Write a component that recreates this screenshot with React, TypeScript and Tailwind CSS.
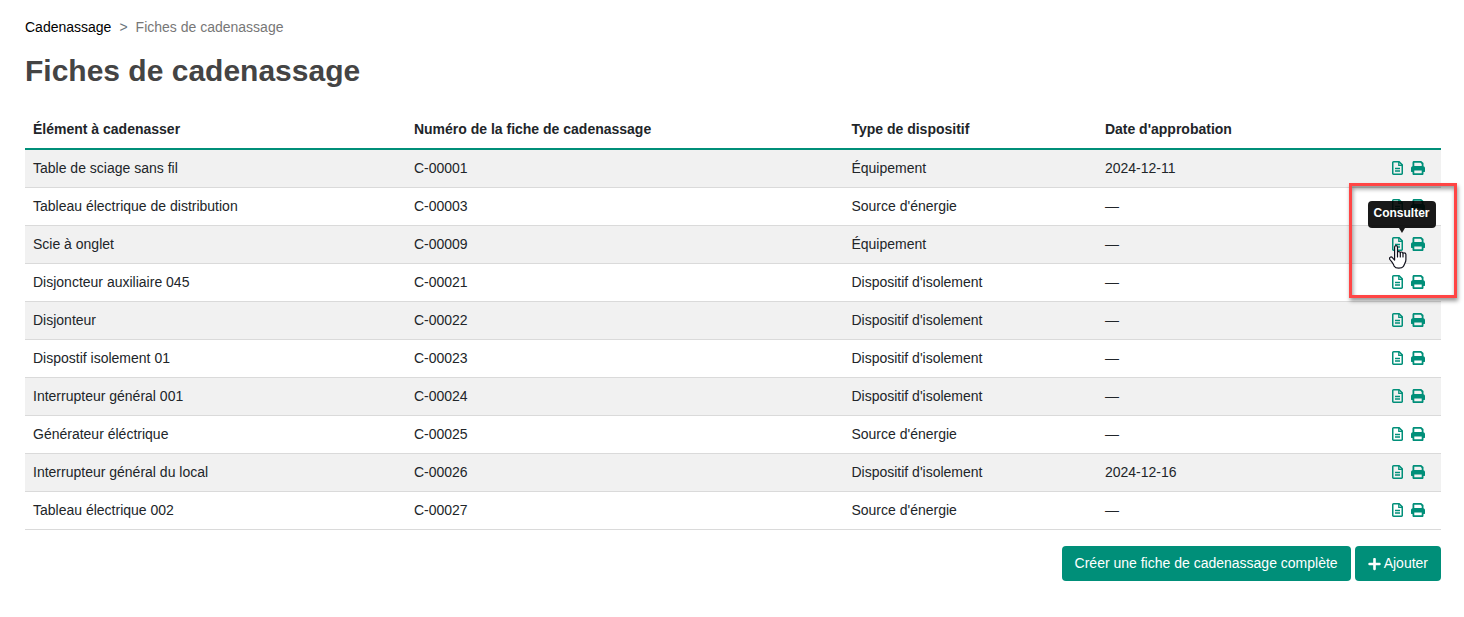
import React from "react";
import { FaPlus } from "react-icons/fa";

interface Fiche {
  element: string;
  numero: string;
  type: string;
  /** ISO date, or null while the sheet is not approved */
  approbation: string | null;
}

const FICHES: Fiche[] = [
  { element: "Table de sciage sans fil", numero: "C-00001", type: "Équipement", approbation: "2024-12-11" },
  { element: "Tableau électrique de distribution", numero: "C-00003", type: "Source d'énergie", approbation: null },
  { element: "Scie à onglet", numero: "C-00009", type: "Équipement", approbation: null },
  { element: "Disjoncteur auxiliaire 045", numero: "C-00021", type: "Dispositif d'isolement", approbation: null },
  { element: "Disjonteur", numero: "C-00022", type: "Dispositif d'isolement", approbation: null },
  { element: "Dispostif isolement 01", numero: "C-00023", type: "Dispositif d'isolement", approbation: null },
  { element: "Interrupteur général 001", numero: "C-00024", type: "Dispositif d'isolement", approbation: null },
  { element: "Générateur éléctrique", numero: "C-00025", type: "Source d'énergie", approbation: null },
  { element: "Interrupteur général du local", numero: "C-00026", type: "Dispositif d'isolement", approbation: "2024-12-16" },
  { element: "Tableau électrique 002", numero: "C-00027", type: "Source d'énergie", approbation: null },
];

const HIGHLIGHTED = "C-00009";

function FileIcon() {
  return (
    <svg aria-hidden="true" viewBox="0 0 11 14" className="h-3.5 w-[11px]" fill="none" stroke="currentColor">
      <path d="M1.500.75h5.600L10.250 3.900V12.500a.75.75 0 0 1-.75.75h-8a.75.75 0 0 1-.75-.75v-11a.75.75 0 0 1 .75-.75z" strokeWidth="1.500" />
      <path d="M6.800 1v3.300h3.200" strokeWidth="1.300" />
      <path d="M3 7.500h5M3 10h5" strokeWidth="1.400" />
    </svg>
  );
}

function PrintIcon() {
  return (
    <svg aria-hidden="true" viewBox="0 0 14 14" className="size-3.5">
      <path
        fill="currentColor"
        fillRule="evenodd"
        d="M1.500 1.500C1.500.6 2.100 0 3 0h7.200l2.300 2.100V5.200c.9.200 1.500 1 1.500 2V10.500c0 .3-.2.500-.5.500h-1v1.700c0 .8-.5 1.300-1.300 1.300H2.800c-.8 0-1.300-.5-1.300-1.300V11h-1c-.3 0-.5-.2-.5-.5V7.200c0-1 .6-1.800 1.500-2zM3.300 1.800v3.200h7.400V2.900L9.500 1.800zM3.300 9.600v2.600h7.400V9.600z"
      />
    </svg>
  );
}

function HandCursor() {
  return (
    <svg
      aria-hidden="true"
      viewBox="0 0 18 24"
      className="pointer-events-none absolute top-2 -left-[3px] h-6 w-[18px]"
    >
      <path
        d="M5.600 2.400c0-1 .6-1.700 1.400-1.700s1.500.7 1.500 1.700v5.100c.2-.7.7-1 1.300-1 .8 0 1.300.5 1.400 1.300.2-.5.7-.8 1.300-.8.8 0 1.300.6 1.400 1.400.2-.3.6-.5 1.100-.5.9 0 1.900.7 1.900 1.700v5.100c0 1.700-.6 2.800-1.200 4-.5 1.100-.8 1.700-1.200 2.600-.9 1.200-2.500 1.900-4.700 1.900-2.300 0-3.900-.7-4.600-1.900-.4-1.500-1.200-2.700-2.200-4.100L.9 14.500c-.6-1-.4-1.900.3-2.300.8-.5 1.700-.2 2.400.6l2 2.300z"
        fill="#fff"
        stroke="#10101c"
        strokeWidth="1.200"
        strokeLinejoin="round"
      />
      <path d="M8.500 7.500v4.500M11.300 8v4M14 9v3" stroke="#10101c" strokeWidth="1.200" strokeLinecap="round" />
    </svg>
  );
}

function RowActions({ fiche, highlighted }: { fiche: Fiche; highlighted: boolean }) {
  return (
    <div className="relative flex h-[21px] items-start justify-end pt-[3px] pr-2 text-[#008f79]">
      <div className="relative flex">
        <button type="button" aria-label={`Consulter ${fiche.numero}`} className="cursor-pointer pr-2">
          <FileIcon />
        </button>
        {highlighted && (
          <>
            <div
              role="tooltip"
              className="absolute bottom-full left-1/2 z-10 mb-[9px] -translate-x-1/2 rounded bg-black/90 px-1.5 pt-[3px] pb-[5px] text-xs leading-[19px] font-bold text-white"
            >
              Consulter
              <span className="absolute top-full left-1/2 -translate-x-1/2 border-x-3 border-t-5 border-x-transparent border-t-black/90" />
            </div>
            <HandCursor />
          </>
        )}
      </div>
      <button type="button" aria-label={`Imprimer ${fiche.numero}`} className="cursor-pointer">
        <PrintIcon />
      </button>
      {highlighted && (
        <div className="pointer-events-none absolute -top-[51px] -right-6 -bottom-[43px] z-20 w-[108px] border-3 border-[#ff4545] shadow-[1px_3px_4px_rgba(0,0,0,0.4),inset_1px_3px_4px_rgba(0,0,0,0.4)]" />
      )}
    </div>
  );
}

export default function App() {
  return (
    <main className="bg-white pt-[17px] pr-[23px] pb-9 pl-[25px] font-['Liberation_Sans',Arial,sans-serif] text-sm leading-[21px] text-[#212529]">
      <nav aria-label="Fil d'Ariane">
        <ol className="flex gap-2">
          <li>
            <a href="#cadenassage" className="text-black">
              Cadenassage
            </a>
          </li>
          <li aria-hidden="true" className="text-[#6c757d]">
            &gt;
          </li>
          <li aria-current="page" className="text-[#777]">
            Fiches de cadenassage
          </li>
        </ol>
      </nav>

      <h1 className="mt-[15px] text-[30px] leading-9 font-bold text-[#444]">Fiches de cadenassage</h1>

      <table className="mt-[22px] w-full table-fixed border-collapse text-left">
        <thead>
          <tr className="border-b-2 border-[#008f79]">
            <th className="w-[26.9%] p-2">Élément à cadenasser</th>
            <th className="w-[30.9%] p-2">Numéro de la fiche de cadenassage</th>
            <th className="w-[17.9%] p-2">Type de dispositif</th>
            <th className="p-2">Date d'approbation</th>
            <th className="w-[100px]" aria-label="Actions" />
          </tr>
        </thead>
        <tbody>
          {FICHES.map((fiche) => (
            <tr key={fiche.numero} className="border-b border-[#dadada] odd:bg-[#f1f1f1]">
              <td className="p-2">{fiche.element}</td>
              <td className="p-2">{fiche.numero}</td>
              <td className="p-2">{fiche.type}</td>
              <td className="p-2">{fiche.approbation ?? "—"}</td>
              <td className="p-2">
                <RowActions fiche={fiche} highlighted={fiche.numero === HIGHLIGHTED} />
              </td>
            </tr>
          ))}
        </tbody>
      </table>

      <div className="mt-4 flex justify-end gap-1">
        <button type="button" className="cursor-pointer rounded bg-[#008f79] px-[13px] py-[7px] text-white">
          Créer une fiche de cadenassage complète
        </button>
        <button
          type="button"
          className="flex cursor-pointer items-center gap-[3px] rounded bg-[#008f79] px-[13px] py-[7px] text-white"
        >
          <FaPlus className="h-3.5 w-[13px]" />
          Ajouter
        </button>
      </div>
    </main>
  );
}
